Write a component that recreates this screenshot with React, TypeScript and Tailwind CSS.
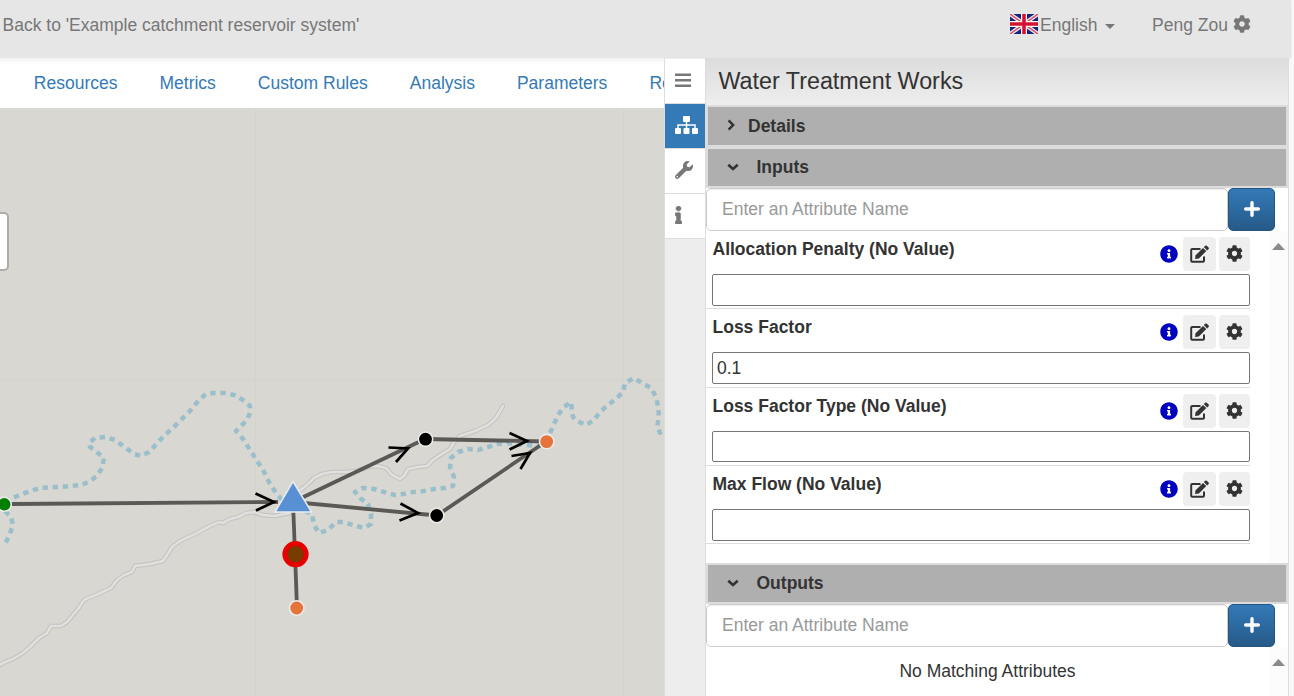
import React from "react";
import { FaCog, FaInfo, FaInfoCircle, FaWrench } from "react-icons/fa";

const navItems = ["Resources", "Metrics", "Custom Rules", "Analysis", "Parameters", "Recorders"];

const attributes = [
  { label: "Allocation Penalty (No Value)", value: "" },
  { label: "Loss Factor", value: "0.1" },
  { label: "Loss Factor Type (No Value)", value: "" },
  { label: "Max Flow (No Value)", value: "" },
];

const rivers = [
  "5,502 12,498 20,495 30,491 40,488 60,487 82,485 90,481 97,476 102,468 104,458 98,453 90,447 89,443 95,438 105,437 115,440 126,448 134,454 141,456 149,452 162,438 177,424 190,411 199,400 206,394 214,393 224,393 234,395 243,400 250,406 250,413 247,420 239,428 236,431 243,439 252,453 263,470 269,482 276,493 282,500",
  "5,511 11,517 13,525 9,536 4,546",
  "305,511 312,514 314,525 319,533 328,530 336,522 343,522 353,525 364,528 371,524 371,514 368,504 360,498 355,492 363,488 374,489 384,492 395,495 403,494 413,492 424,491 434,489 444,488 453,486 454,477 450,467 451,458 458,452 468,449 478,450 488,447 497,444 508,443 518,444 527,445 540,446",
  "550,433 554,424 558,415 564,407 571,402 572,411 573,417 577,421 586,425 594,420 600,412 608,405 616,399 623,392 625,383 634,378 642,383 651,388 656,397 658,406 659,417 657,427 663,438",
];

const roads = [
  "-2,666 5,662 13,659 23,653 30,647 39,638 47,633 51,626 61,626 67,622 78,609 84,600 98,594 111,588 117,580 124,575 132,572 135,566 150,564 163,561 167,555 172,547 180,541 195,534 210,526 219,522 223,523 230,519 238,517 246,513 254,512 263,515 275,516 290,513",
  "295,493 302,489 308,484 314,478 322,474 332,472 345,472 357,471 368,467 378,466 386,468 392,475 400,479 404,476 408,469 418,467 427,466 433,460 442,454 450,449 454,442 460,436 475,431 488,425 496,418 500,411 503,406",
];

const edges = [
  "12,504 278,502",
  "293,502 425,439",
  "293,502 437,515.5",
  "425,439 546,441.5",
  "437,515.5 546,441.5",
  "293,502 295,554 297,608",
];

const arrows = [
  "255.5,493.5 274,502 256,510.5",
  "388.5,447.5 408,448.5 396,462",
  "400.5,503.5 418,513 399.5,520.5",
  "509.5,433 527,441 509.5,449.5",
  "511.5,456 530,453 520.5,469",
];

function Flag() {
  return (
    <svg className="-mt-[3px] h-5 w-7 shrink-0" viewBox="0 0 28 20">
      <rect width="28" height="20" fill="#14247d" />
      <path d="M0 0L28 20M28 0L0 20" stroke="#eeeef3" strokeWidth="4" />
      <path d="M0 0L28 20M28 0L0 20" stroke="#dc5a70" strokeWidth="1.6" />
      <path d="M14 0V20M0 10H28" stroke="#fff" strokeWidth="6" />
      <path d="M14 0V20M0 10H28" stroke="#d8112f" strokeWidth="3.6" />
    </svg>
  );
}

function MenuIcon() {
  return (
    <svg className="h-[14px] w-4" viewBox="0 0 16 14">
      <path d="M0 1.7H16M0 7.2H16M0 12.7H16" stroke="currentColor" strokeWidth="2.6" />
    </svg>
  );
}

function SitemapIcon() {
  return (
    <svg className="h-[18px] w-[23px]" viewBox="0 0 23 18" fill="currentColor">
      <rect x="8" width="7" height="6" rx="1" />
      <rect y="12" width="6" height="6" rx="1" />
      <rect x="8.5" y="12" width="6" height="6" rx="1" />
      <rect x="17" y="12" width="6" height="6" rx="1" />
      <path d="M11.5 5V13M3 13V9H20V13" fill="none" stroke="currentColor" strokeWidth="1.5" />
    </svg>
  );
}

function EditIcon() {
  return (
    <svg className="h-[18px] w-5" viewBox="0 0 20 18" fill="currentColor">
      <path
        d="M10.5 3.9H2.2Q1.2 3.9 1.2 4.9V15.7Q1.2 16.7 2.2 16.7H13Q14 16.7 14 15.7V11.5"
        fill="none"
        stroke="currentColor"
        strokeWidth="2"
      />
      <path d="M5 13.9L5.6 10.2L13 2.9L16.3 6.1L8.9 13.4Z" />
      <path d="M13.8 2.1L15.2 .8Q16 .1 16.8 .8L18.6 2.5Q19.4 3.3 18.6 4.1L17.2 5.4Z" />
    </svg>
  );
}

function ChevronDown() {
  return (
    <svg className="mr-[18px] h-2 w-3 -translate-y-px" viewBox="0 0 12 8">
      <path d="M1.3 1.7L6 6L10.7 1.7" fill="none" stroke="currentColor" strokeWidth="2.7" />
    </svg>
  );
}

function ChevronRight() {
  return (
    <svg className="mr-[13.5px] h-3 w-2 -translate-y-px" viewBox="0 0 8 12">
      <path d="M1.6 1.4L6.1 6L1.6 10.6" fill="none" stroke="currentColor" strokeWidth="2.5" />
    </svg>
  );
}

function NetworkMap() {
  return (
    <svg className="block h-[588px] w-[664px]" viewBox="0 108 664 588">
      <rect y="108" width="664" height="588" fill="#d8d7d1" />
      <path d="M255.5 108V696M623.5 108V696M0 380.5H664" stroke="#d4d3ce" fill="none" />
      <g fill="none" strokeLinejoin="round">
        {roads.map((p) => (
          <polyline key={p} points={p} stroke="#c3c2c0" strokeWidth="4.6" strokeLinecap="round" />
        ))}
        {roads.map((p) => (
          <polyline key={p} points={p} stroke="#e0e0df" strokeWidth="2.6" strokeLinecap="round" />
        ))}
        {rivers.map((p) => (
          <polyline key={p} points={p} stroke="#9abfca" strokeWidth="4.5" strokeDasharray="5.4 4.7" />
        ))}
        {edges.map((p) => (
          <polyline key={p} points={p} stroke="#5a5956" strokeWidth="3.8" />
        ))}
        {arrows.map((p) => (
          <polyline key={p} points={p} stroke="#000" strokeWidth="2.7" strokeLinejoin="miter" />
        ))}
      </g>
      <path d="M293 481.5L311.5 512H275Z" fill="#5990d3" stroke="#e9ebee" strokeWidth="1.5" />
      <g stroke="#ebebea" strokeWidth="1.6">
        <circle cx="4.3" cy="504.3" r="7" fill="#008000" />
        <circle cx="425.5" cy="439.2" r="7.2" fill="#000" />
        <circle cx="436.7" cy="515.5" r="7.2" fill="#000" />
        <circle cx="546.7" cy="441.6" r="7.2" fill="#e6733a" />
        <circle cx="296.7" cy="608" r="7.2" fill="#e6733a" />
      </g>
      <circle cx="295.5" cy="554.2" r="10.6" fill="#783b02" stroke="#e60000" strokeWidth="5" />
    </svg>
  );
}

function SideTab({ children, active = false }: { children: React.ReactNode; active?: boolean }) {
  return (
    <div
      className={
        active
          ? "flex h-[45px] w-10 items-center border-b border-[#ddd] bg-[#337ab7] pb-[2px] pl-2.5 text-white"
          : "flex h-[45px] w-10 items-center border-b border-[#ddd] bg-white pb-0.5 pl-2.5 text-[#777]"
      }
    >
      {children}
    </div>
  );
}

function SectionBar({ title, open = true }: { title: string; open?: boolean }) {
  return (
    <div
      className={
        open
          ? "flex h-[41px] shrink-0 items-center border-2 border-[#dcdcdc] bg-[#afafaf] pl-[18.5px] font-bold"
          : "flex h-[42px] shrink-0 items-center border-2 border-[#dcdcdc] bg-[#afafaf] pl-[18.5px] font-bold"
      }
    >
      {open ? <ChevronDown /> : <ChevronRight />}
      {title}
    </div>
  );
}

function AttributeSearch() {
  return (
    <div className="flex h-[43px] shrink-0">
      <input
        className="h-[43px] w-[522px] rounded-[5px] border border-[#ccc] bg-white px-[15px] shadow-[inset_0_1px_1px_rgba(0,0,0,0.075)] placeholder:text-[#999]"
        placeholder="Enter an Attribute Name"
      />
      <button className="flex h-[43px] w-[47px] items-center justify-center rounded-[5px] border border-[#245580] bg-linear-to-b from-[#337ab7] to-[#265a88] pb-0.5 text-white">
        <svg className="size-4" viewBox="0 0 16 16">
          <path d="M8 1.7V14.3M1.7 8H14.3" stroke="currentColor" strokeWidth="3.4" strokeLinecap="round" />
        </svg>
      </button>
    </div>
  );
}

function ScrollGutter() {
  return (
    <div className="flex w-[19px] shrink-0 justify-center bg-[#fcfcfc] pt-3">
      <svg className="h-[7px] w-[13px]" viewBox="0 0 13 7">
        <path d="M0 7L6.5 0L13 7Z" fill="#8a8a8a" />
      </svg>
    </div>
  );
}

function AttributeRow({ label, value }: { label: string; value: string }) {
  return (
    <div className="flex h-[78.33px] flex-col border-b border-[#ddd] pl-1.5 pt-[6px]">
      <div className="flex h-[37px] shrink-0 items-start">
        <span className="flex-1 pl-[0.5px] font-bold leading-[25px]">{label}</span>
        <FaInfoCircle className="mr-[5px] mt-2 size-[18px] text-[#0000c0]" />
        <button className="mr-[3px] flex h-[34px] w-[33px] items-center justify-center rounded-[4px] bg-[#efefef]">
          <EditIcon />
        </button>
        <button className="flex h-[34px] w-[31px] items-center justify-center rounded-[4px] bg-[#efefef] pb-px">
          <FaCog className="size-[17px]" />
        </button>
      </div>
      <input
        className="h-[31.7px] w-[538px] shrink-0 rounded-[2px] border border-[#767676] bg-white px-1"
        defaultValue={value}
      />
    </div>
  );
}

export default function App() {
  return (
    <div className="flex h-[696px] w-[1294px] overflow-hidden bg-[#f8f8f8] font-['Liberation_Sans',Arial,sans-serif] text-[17.5px] leading-[25px] text-[#333]">
      <div className="flex w-[1290px] flex-col">
        <header className="flex h-[58px] shrink-0 items-start bg-[#e6e6e6] pl-[2.5px] pt-[13px] text-[#777] shadow-[0_0_3px_rgba(0,0,0,0.2)]">
          <span className="flex-1">Back to 'Example catchment reservoir system'</span>
          <div className="flex w-[142px] items-center">
            <Flag />
            <span className="ml-[2px]">English</span>
            <span className="ml-2 mt-0.5 border-x-[5px] border-t-[5px] border-x-transparent border-t-[#777]" />
          </div>
          <div className="flex w-[138px] items-center">
            Peng Zou
            <FaCog className="-mt-[3px] ml-[5px] size-[18px]" />
          </div>
        </header>

        <div className="flex min-h-0 flex-1">
          <main className="w-[664px] overflow-hidden">
            <nav className="flex h-[50px] items-center gap-[42px] overflow-hidden whitespace-nowrap bg-white bg-linear-to-b from-[#f3f3f3] to-white to-15% pl-[33.8px] text-[#337ab7]">
              {navItems.map((item) => (
                <a key={item}>{item}</a>
              ))}
            </nav>
            <div className="relative">
              <NetworkMap />
              <div className="absolute left-[-40px] top-[104px] h-[59px] w-[49px] rounded-[5px] border-2 border-[#adaca7] bg-white" />
            </div>
          </main>

          <aside className="w-[42px] border-x border-[#ddd] bg-[#ededed] pt-px">
            <SideTab>
              <MenuIcon />
            </SideTab>
            <SideTab active>
              <SitemapIcon />
            </SideTab>
            <SideTab>
              <FaWrench className="size-[18px]" />
            </SideTab>
            <SideTab>
              <FaInfo className="h-[18px] w-[7px]" stroke="currentColor" strokeWidth="16" />
            </SideTab>
          </aside>

          <section className="flex w-[583px] flex-col border-r border-[#ddd] bg-white">
            <h1 className="h-[47px] shrink-0 bg-linear-to-b from-[#dcdcdc] to-[#eee] pl-[12.5px] pt-[11px] text-[23.3px]">
              Water Treatment Works
            </h1>
            <SectionBar title="Details" open={false} />
            <SectionBar title="Inputs" />
            <AttributeSearch />
            <div className="flex h-[332px] shrink-0">
              <div className="w-[544px]">
                {attributes.map((a) => (
                  <AttributeRow key={a.label} label={a.label} value={a.value} />
                ))}
              </div>
              <div className="flex-1" />
              <ScrollGutter />
            </div>
            <SectionBar title="Outputs" />
            <AttributeSearch />
            <div className="flex flex-1">
              <div className="flex-1 pt-3 text-center">No Matching Attributes</div>
              <ScrollGutter />
            </div>
          </section>
        </div>
      </div>
    </div>
  );
}
